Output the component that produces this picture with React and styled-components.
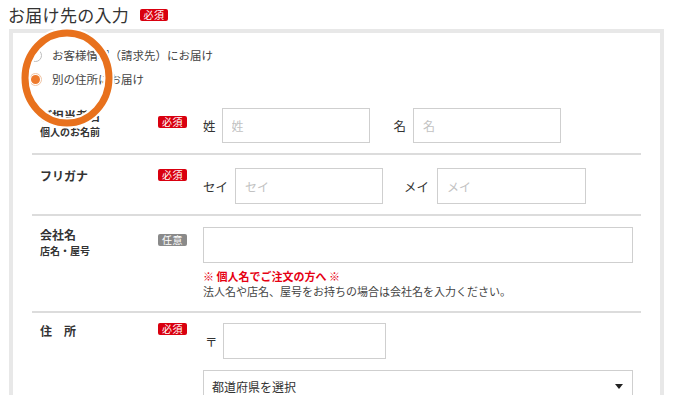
import React from "react";
import styled, { createGlobalStyle } from "styled-components";

const Global = createGlobalStyle`
  html, body { margin: 0; padding: 0; background: #fff; }
  body { font-family: "Noto Sans CJK JP", "Noto Sans", sans-serif; color: #333; }
  * { box-sizing: border-box; }
`;

const Page = styled.div`
  position: relative;
  width: 685px;
`;

const TitleBar = styled.div`
  height: 29px;
  display: flex;
  align-items: center;
  padding-left: 8px;
  gap: 11px;
`;

const Title = styled.h2`
  margin: 0;
  font-size: 17px;
  font-weight: 400;
  line-height: 20px;
  color: #333;
  letter-spacing: 0.3px;
`;

const BadgeCell = styled.div`
  display: flex;
  align-items: flex-start;
  padding-top: ${(p) => p.$mt || 0}px;
`;

const Badge = styled.span`
  display: flex;
  align-items: center;
  justify-content: center;
  width: ${(p) => p.$w || 29}px;
  height: ${(p) => p.$h || 12}px;
  border-radius: 2px;
  background: ${(p) => (p.$optional ? "#8a8a8a" : "#d9000f")};
  color: #fff;
  font-size: 10px;
  line-height: 1;
  letter-spacing: 0.5px;
`;

const Panel = styled.section`
  margin-left: 9px;
  width: 655px;
  border: 4px solid #e8e8e8;
  border-bottom: none;
  background: #fff;
  padding-bottom: 40px;
`;

const RadioGroup = styled.div`
  padding: 10px 0 0 16px;
  display: flex;
  flex-direction: column;
`;

const RadioLine = styled.label`
  height: 24px;
  display: flex;
  align-items: center;
  gap: 10px;
  font-size: 11.5px;
  color: #444;
`;

const RadioDot = styled.span`
  width: 13px;
  height: 13px;
  border-radius: 50%;
  border: 1px solid ${(p) => (p.$checked ? "#f0c4a4" : "#bdbdbd")};
  background: #fff;
  display: inline-flex;
  align-items: center;
  justify-content: center;
  &::after {
    content: "";
    width: 9px;
    height: 9px;
    border-radius: 50%;
    background: ${(p) => (p.$checked ? "#ee7a2c" : "transparent")};
  }
`;

const Rows = styled.div`
  margin: 4px 19px 0 19px;
`;

const Row = styled.div`
  display: grid;
  grid-template-columns: 118px 45px 1fr;
  align-items: start;
  padding: ${(p) => p.$pt}px 0 ${(p) => p.$pb}px 8px;
  border-bottom: ${(p) => (p.$last ? "none" : "2px solid #dcdcdc")};
`;

const LabelCol = styled.div`
  margin-top: ${(p) => p.$mt || 0}px;
  display: flex;
  flex-direction: column;
`;

const LabelMain = styled.span`
  font-size: 12px;
  font-weight: 700;
  line-height: 14px;
  color: #333;
`;

const LabelSub = styled.span`
  font-size: 10px;
  font-weight: 700;
  line-height: 13px;
  margin-top: 2px;
  color: #333;
`;

const FieldCol = styled.div`
  display: flex;
  flex-direction: column;
`;

const FieldLine = styled.div`
  display: flex;
  align-items: center;
`;

const FieldLabel = styled.span`
  font-size: 12.5px;
  color: #333;
  margin-left: ${(p) => p.$ml || 0}px;
  margin-right: ${(p) => p.$mr || 8}px;
`;

const Input = styled.input`
  width: ${(p) => p.$w}px;
  height: ${(p) => p.$h || 36}px;
  border: 1px solid #cfcfcf;
  background: #fff;
  padding: 0 9px;
  font-family: inherit;
  font-size: 12px;
  color: #333;
  outline: none;
  &::placeholder { color: #c2c2c2; }
`;

const Note = styled.div`
  margin-top: 6px;
  font-size: 11px;
  line-height: 15px;
`;

const NoteRed = styled.div`
  color: #e60012;
  font-weight: 700;
`;

const NoteText = styled.div`
  color: #444;
`;

const Select = styled.div`
  margin-top: 11px;
  width: 430px;
  height: 36px;
  border: 1px solid #cfcfcf;
  display: flex;
  align-items: center;
  justify-content: space-between;
  padding: 0 8px 4px 8px;
  font-size: 12px;
  color: #333;
`;

const Caret = styled.span`
  width: 0;
  height: 0;
  border-left: 4px solid transparent;
  border-right: 4px solid transparent;
  border-top: 5px solid #222;
  margin-right: 1px;
`;

const Ring = styled.svg`
  position: absolute;
  left: 17px;
  top: 27px;
  pointer-events: none;
`;

export default function App() {
  return (
    <Page>
      <Global />
      <TitleBar>
        <Title>お届け先の入力</Title>
        <Badge $w={28} $h={12}>必須</Badge>
      </TitleBar>
      <Panel>
        <RadioGroup>
          <RadioLine>
            <RadioDot />
            お客様情報（請求先）にお届け
          </RadioLine>
          <RadioLine>
            <RadioDot $checked />
            別の住所にお届け
          </RadioLine>
        </RadioGroup>
        <Rows>
          <Row $pt={13} $pb={10}>
            <LabelCol $mt={1}>
              <LabelMain>ご担当者名</LabelMain>
              <LabelSub>個人のお名前</LabelSub>
            </LabelCol>
            <BadgeCell $mt={8}><Badge>必須</Badge></BadgeCell>
            <FieldCol>
              <FieldLine>
                <FieldLabel $mr={6}>姓</FieldLabel>
                <Input $w={148} $h={35} placeholder="姓" />
                <FieldLabel $ml={24} $mr={7}>名</FieldLabel>
                <Input $w={148} $h={35} placeholder="名" />
              </FieldLine>
            </FieldCol>
          </Row>
          <Row $pt={13} $pb={10}>
            <LabelCol $mt={1}>
              <LabelMain>フリガナ</LabelMain>
            </LabelCol>
            <BadgeCell $mt={1}><Badge>必須</Badge></BadgeCell>
            <FieldCol>
              <FieldLine>
                <FieldLabel $mr={7}>セイ</FieldLabel>
                <Input $w={148} placeholder="セイ" />
                <FieldLabel $ml={21} $mr={8}>メイ</FieldLabel>
                <Input $w={149} placeholder="メイ" />
              </FieldLine>
            </FieldCol>
          </Row>
          <Row $pt={11} $pb={12}>
            <LabelCol $mt={1}>
              <LabelMain>会社名</LabelMain>
              <LabelSub>店名・屋号</LabelSub>
            </LabelCol>
            <BadgeCell $mt={7}><Badge $optional>任意</Badge></BadgeCell>
            <FieldCol>
              <Input $w={430} />
              <Note>
                <NoteRed>※ 個人名でご注文の方へ ※</NoteRed>
                <NoteText>法人名や店名、屋号をお持ちの場合は会社名を入力ください。</NoteText>
              </Note>
            </FieldCol>
          </Row>
          <Row $pt={10} $pb={10} $last>
            <LabelCol $mt={1}>
              <LabelMain>住　所</LabelMain>
            </LabelCol>
            <BadgeCell $mt={0}><Badge>必須</Badge></BadgeCell>
            <FieldCol>
              <FieldLine>
                <FieldLabel $ml={2} $mr={5}>〒</FieldLabel>
                <Input $w={163} />
              </FieldLine>
              <Select>
                都道府県を選択
                <Caret />
              </Select>
            </FieldCol>
          </Row>
        </Rows>
      </Panel>
      <Ring width="100" height="104" viewBox="0 0 100 104">
        <ellipse cx="50" cy="51" rx="42" ry="45" fill="none" stroke="#fff" strokeWidth="11" />
        <ellipse cx="50" cy="51" rx="42" ry="45" fill="none" stroke="#e8711d" strokeWidth="7" />
      </Ring>
    </Page>
  );
}
